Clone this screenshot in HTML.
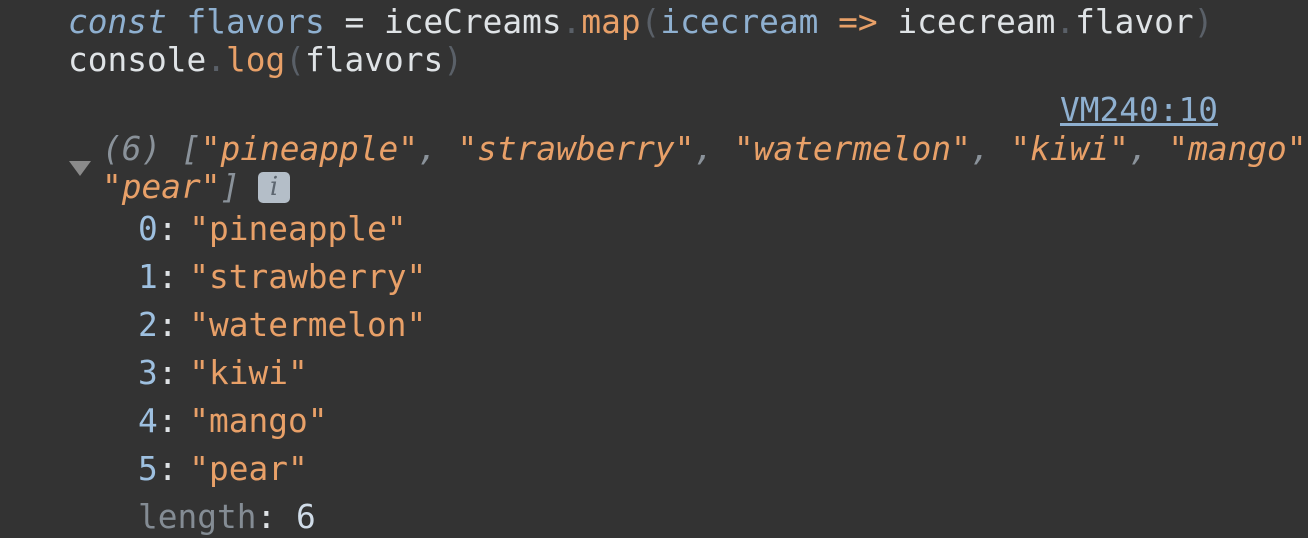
<!DOCTYPE html><html><head><style>
body{margin:0;width:1308px;height:538px;background:#333333;overflow:hidden;font-family:"DejaVu Sans Mono","Liberation Mono",monospace;font-size:32.8px;}
.l{position:absolute;white-space:nowrap;line-height:38px;height:38px;}
.b{color:#8fb0d0}.w{color:#dfe3e6}.o{color:#e8a068}.g{color:#5a6068}.gi{color:#8a929a}
.idx{color:#9ec0e0}.len{color:#848c94}
i{font-style:italic}
.sp{margin-left:-8px}
</style></head><body>
<div class="l" style="left:68px;top:3px"><i class="b">const</i> <span class="b">flavors</span> <span class="w">= iceCreams</span><span class="g">.</span><span class="o">map</span><span class="g">(</span><span class="b">icecream</span> <span class="o">=&gt;</span> <span class="w">icecream</span><span class="g">.</span><span class="w">flavor</span><span class="g">)</span></div>
<div class="l" style="left:68px;top:41px"><span class="w">console</span><span class="g">.</span><span class="o">log</span><span class="g">(</span><span class="w">flavors</span><span class="g">)</span></div>
<div class="l" style="left:1060px;top:91px;color:#8fb0d0;text-decoration:underline">VM240:10</div>
<svg style="position:absolute;left:69px;top:161px" width="24" height="16"><polygon points="0,0 22,0 11,15" fill="#8a8a8a"/></svg>
<div class="l" style="left:102px;top:130px;width:1206px;overflow:hidden"><i><span class="gi">(6) [</span><span class="o">"pineapple"</span><span class="gi">, </span><span class="o">"strawberry"</span><span class="gi">, </span><span class="o">"watermelon"</span><span class="gi">, </span><span class="o">"kiwi"</span><span class="gi">, </span><span class="o">"mango"</span><span class="gi">,</span></i></div>
<div class="l" style="left:102px;top:168px"><i><span class="o">"pear"</span><span class="gi">]</span></i></div>
<div style="position:absolute;left:258px;top:172px;width:32px;height:31px;background:#b4bec8;border-radius:5px;color:#5d6670;font-style:italic;font-size:26px;line-height:31px;text-align:center;font-family:'DejaVu Serif',serif">i</div>
<div class="l" style="left:138px;top:210px"><span class="idx">0</span><span class="w">:</span> <span class="o sp">"pineapple"</span></div>
<div class="l" style="left:138px;top:258px"><span class="idx">1</span><span class="w">:</span> <span class="o sp">"strawberry"</span></div>
<div class="l" style="left:138px;top:306px"><span class="idx">2</span><span class="w">:</span> <span class="o sp">"watermelon"</span></div>
<div class="l" style="left:138px;top:354px"><span class="idx">3</span><span class="w">:</span> <span class="o sp">"kiwi"</span></div>
<div class="l" style="left:138px;top:402px"><span class="idx">4</span><span class="w">:</span> <span class="o sp">"mango"</span></div>
<div class="l" style="left:138px;top:450px"><span class="idx">5</span><span class="w">:</span> <span class="o sp">"pear"</span></div>
<div class="l" style="left:138px;top:498px"><span class="len">length</span><span class="w">:</span> <span style="color:#d0dce8">6</span></div>
</body></html>
